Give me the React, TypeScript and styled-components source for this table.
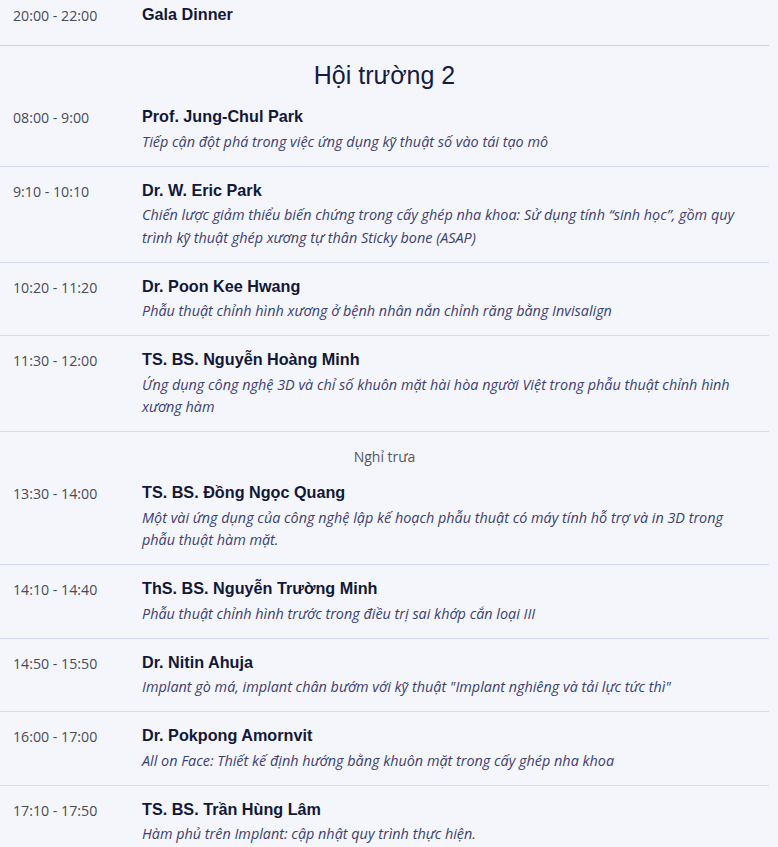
import styled, { createGlobalStyle } from 'styled-components';

const GlobalStyle = createGlobalStyle`
  html, body {
    margin: 0;
    padding: 0;
    background: #f5f6fc;
  }
  body {
    font-family: 'Open Sans', sans-serif;
  }
`;

type Talk = { time: string; name: string; desc?: string };

const hall2Morning: Talk[] = [
  { time: '08:00 - 9:00', name: 'Prof. Jung-Chul Park', desc: 'Tiếp cận đột phá trong việc ứng dụng kỹ thuật số vào tái tạo mô' },
  {
    time: '9:10 - 10:10',
    name: 'Dr. W. Eric Park',
    desc: 'Chiến lược giảm thiểu biến chứng trong cấy ghép nha khoa: Sử dụng tính “sinh học”, gồm quy trình kỹ thuật ghép xương tự thân Sticky bone (ASAP)',
  },
  { time: '10:20 - 11:20', name: 'Dr. Poon Kee Hwang', desc: 'Phẫu thuật chỉnh hình xương ở bệnh nhân nắn chỉnh răng bằng Invisalign' },
  {
    time: '11:30 - 12:00',
    name: 'TS. BS. Nguyễn Hoàng Minh',
    desc: 'Ứng dụng công nghệ 3D và chỉ số khuôn mặt hài hòa người Việt trong phẫu thuật chỉnh hình xương hàm',
  },
];

const hall2Afternoon: Talk[] = [
  {
    time: '13:30 - 14:00',
    name: 'TS. BS. Đồng Ngọc Quang',
    desc: 'Một vài ứng dụng của công nghệ lập kế hoạch phẫu thuật có máy tính hỗ trợ và in 3D trong phẫu thuật hàm mặt.',
  },
  { time: '14:10 - 14:40', name: 'ThS. BS. Nguyễn Trường Minh', desc: 'Phẫu thuật chỉnh hình trước trong điều trị sai khớp cắn loại III' },
  { time: '14:50 - 15:50', name: 'Dr. Nitin Ahuja', desc: 'Implant gò má, implant chân bướm với kỹ thuật "Implant nghiêng và tải lực tức thì"' },
  { time: '16:00 - 17:00', name: 'Dr. Pokpong Amornvit', desc: 'All on Face: Thiết kế định hướng bằng khuôn mặt trong cấy ghép nha khoa' },
  { time: '17:10 - 17:50', name: 'TS. BS. Trần Hùng Lâm', desc: 'Hàm phủ trên Implant: cập nhật quy trình thực hiện.' },
];

const Page = styled.div`
  width: 769px;
  margin-top: -9px;
`;

const Section = styled.section<{ $divider?: string }>`
  border-bottom: ${({ $divider }) => ($divider ? `1px solid ${$divider}` : 'none')};
`;

const HallTitle = styled.h2`
  margin: 0;
  padding: 15px 0 4px;
  text-align: center;
  font-family: 'Liberation Sans', Arial, sans-serif;
  font-weight: 400;
  font-size: 25px;
  line-height: 28px;
  color: #161b45;
`;

const Row = styled.div<{ $last?: boolean; $short?: boolean }>`
  display: grid;
  grid-template-columns: 142px 1fr;
  padding: 13px 0 ${({ $short }) => ($short ? '19px' : '12.5px')};
  border-bottom: ${({ $last }) => ($last ? 'none' : '1px solid #d5d8f7')};
`;

const Time = styled.div`
  padding: 2px 0 0 13px;
  font-size: 14.2px;
  line-height: 20px;
  color: #4a4a55;
`;

const Body = styled.div`
  display: flex;
  flex-direction: column;
  gap: 4.5px;
  padding-right: 30px;
`;

const Speaker = styled.div`
  font-family: 'Liberation Sans', Arial, sans-serif;
  font-weight: 700;
  font-size: 16.2px;
  line-height: 20px;
  color: #121838;
`;

const Topic = styled.div`
  font-style: italic;
  font-size: 14.4px;
  line-height: 22.5px;
  color: #3a4072;
`;

const Break = styled.div`
  padding: 15px 0 2px;
  text-align: center;
  font-size: 14px;
  line-height: 20px;
  color: #555560;
  border-top: 1px solid #d5d8f7;
`;

const TalkRow = ({ talk, last }: { talk: Talk; last?: boolean }) => (
  <Row $last={last} $short={!talk.desc}>
    <Time>{talk.time}</Time>
    <Body>
      <Speaker>{talk.name}</Speaker>
      {talk.desc && <Topic>{talk.desc}</Topic>}
    </Body>
  </Row>
);

const App = () => {
  return (
    <>
      <GlobalStyle />
      <Page>
        <Section $divider="#c3d0ea">
          <TalkRow talk={{ time: '20:00 - 22:00', name: 'Gala Dinner' }} last />
        </Section>
        <Section>
          <HallTitle>Hội trường 2</HallTitle>
          {hall2Morning.map((t, i) => (
            <TalkRow key={t.time} talk={t} last={i === hall2Morning.length - 1} />
          ))}
          <Break>Nghỉ trưa</Break>
          {hall2Afternoon.map((t, i) => (
            <TalkRow key={t.time} talk={t} last={i === hall2Afternoon.length - 1} />
          ))}
        </Section>
      </Page>
    </>
  );
};

export default App;
